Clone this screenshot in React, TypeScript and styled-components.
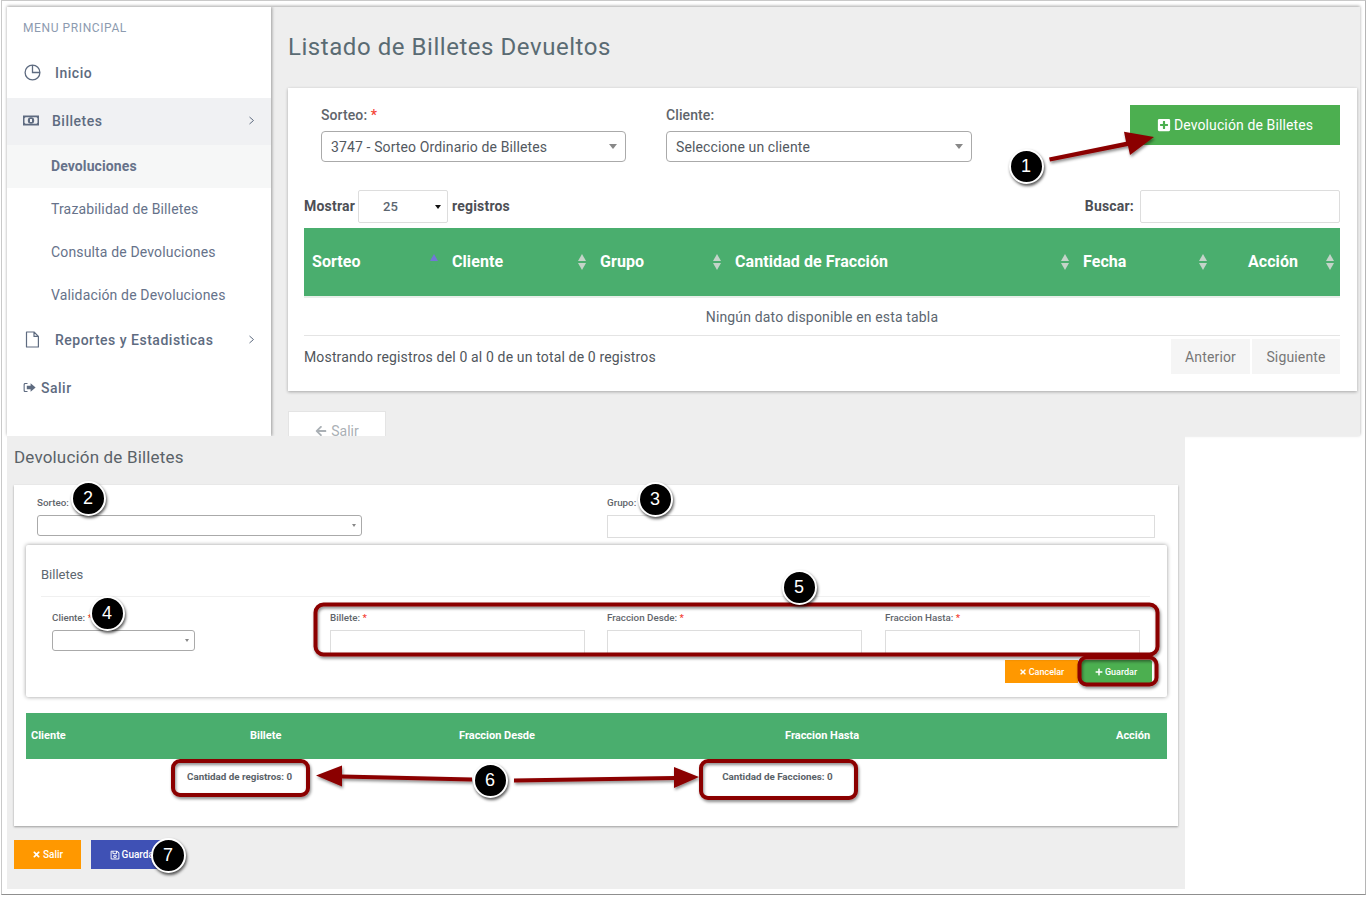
import React from "react";
import styled, { createGlobalStyle } from "styled-components";
import { FaPlusSquare, FaPlus, FaTimes, FaArrowLeft, FaRegSave } from "react-icons/fa";

const Global = createGlobalStyle`
  html, body { margin: 0; padding: 0; background: #fff; }
  * { box-sizing: border-box; }
  body { font-family: Roboto, "Liberation Sans", sans-serif; color: #5c6670; }
`;

const Frame = styled.div`
  position: relative;
  width: 1365px;
  height: 895px;
  margin-left: 1px;
  padding: 6px 5px 5px 5px;
  background: #fff;
  border: 1px solid #c9c9c9;
  border-bottom-color: #8f8f8f;
  border-right-color: #b5b5b5;
`;
const TopShot = styled.div`
  display: flex;
  width: 1353px;
  height: 429px;
  overflow: hidden;
  background: #eee;
  box-shadow: 0 -1px 3px rgba(0,0,0,.35);
`;
const Sidebar = styled.nav`
  width: 264px;
  flex: none;
  background: #fff;
  box-shadow: 1px 0 3px rgba(0,0,0,.35);
  z-index: 1;
`;
const MenuTitle = styled.div`
  height: 42px;
  padding: 14px 0 0 16px;
  font-size: 12px;
  line-height: 14px;
  color: #8d9bb0;
  letter-spacing: .6px;
`;
const MenuRow = styled.div<{ $active?: boolean; $h?: number; $pl?: number }>`
  display: flex;
  align-items: center;
  height: ${p => p.$h ?? 47}px;
  padding: 0 16px 2px ${p => p.$pl ?? 17}px;
  background: ${p => (p.$active ? "#f0f1f3" : "transparent")};
  font-size: 14px;
  font-weight: 500;
  letter-spacing: .5px;
  color: #5e6b80;
`;
const MenuIcon = styled.svg<{ $w: number }>`
  width: ${p => p.$w}px;
  height: 17px;
  flex: none;
  color: #5e6b80;
`;
const MenuLabel = styled.span<{ $ml: number }>`
  margin-left: ${p => p.$ml}px;
  flex: 1;
`;
const SubRow = styled.div<{ $active?: boolean }>`
  display: flex;
  align-items: center;
  height: 43px;
  padding: 0 0 2px 44px;
  font-size: 14px;
  font-weight: ${p => (p.$active ? 700 : 400)};
  letter-spacing: ${p => (p.$active ? ".1px" : ".15px")};
  color: #66728a;
  background: ${p => (p.$active ? "#f6f7f7" : "transparent")};
`;
const Main = styled.main`
  flex: 1;
  padding: 26px 3px 0 17px;
`;
const Title = styled.h1`
  margin: 0 0 27px;
  height: 28px;
  font-size: 24px;
  line-height: 28px;
  font-weight: 400;
  letter-spacing: .55px;
  color: #5a6b73;
`;
const Card = styled.section`
  height: 303px;
  padding: 0 17px 0 16px;
  background: #fff;
  box-shadow: 0 1px 3px rgba(0,0,0,.3);
`;
const FilterRow = styled.div`
  display: flex;
  height: 102px;
  padding: 17px 0 0 17px;
`;
const Field = styled.div<{ $w: number; $mr?: number }>`
  width: ${p => p.$w}px;
  margin-right: ${p => p.$mr ?? 0}px;
  flex: none;
`;
const Label = styled.div`
  height: 20px;
  margin-bottom: 6px;
  font-size: 14px;
  line-height: 20px;
  font-weight: 500;
  letter-spacing: .1px;
  color: #5f656b;
`;
const Req = styled.span`color: #f44336;`;
const SelectBox = styled.div`
  display: flex;
  align-items: center;
  justify-content: space-between;
  height: 31px;
  padding: 0 8px 0 9px;
  border: 1px solid #aaa;
  border-radius: 4px;
  font-size: 14px;
  letter-spacing: .12px;
  color: #53595f;
`;
const Caret = styled.i<{ $s?: number; $c?: string }>`
  display: block;
  width: 0;
  height: 0;
  border-left: ${p => p.$s ?? 4}px solid transparent;
  border-right: ${p => p.$s ?? 4}px solid transparent;
  border-top: ${p => (p.$s ?? 4) + 1}px solid ${p => p.$c ?? "#888"};
`;
const AddButton = styled.button`
  display: flex;
  align-items: center;
  justify-content: center;
  gap: 3px;
  width: 210px;
  height: 40px;
  margin-left: auto;
  border: 0;
  background: #4caf50;
  color: #fff;
  font: 400 14px Roboto, sans-serif;
  letter-spacing: .12px;
`;
const Controls = styled.div`
  display: flex;
  align-items: center;
  height: 33px;
  padding-bottom: 2px;
  font-size: 14px;
  font-weight: 700;
  letter-spacing: .2px;
  color: #4d4f55;
`;
const LenSelect = styled.div`
  display: flex;
  align-items: center;
  width: 90px;
  height: 33px;
  margin: 2px 4px 0 3px;
  padding: 0 6px 0 24px;
  border: 1px solid #ddd;
  border-radius: 2px;
  justify-content: space-between;
  font-size: 13px;
  font-weight: 500;
  color: #5c6670;
`;
const SearchBox = styled.div`
  width: 200px;
  height: 33px;
  margin: 2px 0 0 6px;
  border: 1px solid #ddd;
  border-radius: 2px;
`;
const Spacer = styled.div`flex: 1;`;
const TableHead = styled.div`
  display: grid;
  grid-template-columns: 140px 148px 135px 348px 138px 127px;
  height: 70px;
  margin-top: 5px;
  background: #4aae6e;
  border-bottom: 2px solid #e8efe9;
`;
const HeadCell = styled.div<{ $center?: boolean }>`
  position: relative;
  display: flex;
  align-items: center;
  justify-content: ${p => (p.$center ? "center" : "flex-start")};
  padding: 0 ${p => (p.$center ? "15px" : "8px")} 2px 8px;
  font-size: 16px;
  font-weight: 700;
  letter-spacing: .08px;
  color: #fff;
`;
const SortWrap = styled.span`
  position: absolute;
  right: 6px;
  top: 26px;
  display: flex;
  flex-direction: column;
  gap: 2px;
`;
const Up = styled.i<{ $c: string }>`
  display: block;
  width: 0;
  height: 0;
  border-left: 4.5px solid transparent;
  border-right: 4.5px solid transparent;
  border-bottom: 7px solid ${p => p.$c};
`;
const Down = styled.i<{ $c: string }>`
  display: block;
  width: 0;
  height: 0;
  border-left: 4.5px solid transparent;
  border-right: 4.5px solid transparent;
  border-top: 7px solid ${p => p.$c};
`;
const EmptyRow = styled.div`
  display: flex;
  align-items: center;
  justify-content: center;
  height: 38px;
  border-bottom: 1px solid #e4e4e4;
  font-size: 14px;
  letter-spacing: .15px;
  color: #5c6670;
`;
const Footer = styled.div`
  display: flex;
  align-items: center;
  height: 35px;
  margin-top: 3px;
  font-size: 14px;
  letter-spacing: .15px;
  color: #50565c;
`;
const PageButton = styled.div<{ $w: number }>`
  display: flex;
  align-items: center;
  justify-content: center;
  width: ${p => p.$w}px;
  height: 35px;
  margin-left: 2px;
  background: #f5f5f5;
  color: #777;
`;
const BackButton = styled.div`
  display: flex;
  align-items: center;
  justify-content: center;
  gap: 4px;
  width: 98px;
  height: 40px;
  margin-top: 20px;
  background: #fff;
  border: 1px solid #e4e4e4;
  font-size: 14px;
  color: #aab0b5;
`;
const BottomShot = styled.div`
  position: relative;
  width: 1178px;
  height: 453px;
  padding: 11px 7px 0;
  background: #eee;
  z-index: 2;
`;
const SubTitle = styled.h2`
  margin: 0 0 17px;
  font-size: 17px;
  line-height: 21px;
  font-weight: 400;
  letter-spacing: .17px;
  color: #5a6268;
`;
const FormCard = styled.section`
  width: 1164px;
  height: 341px;
  padding: 12px 11px 0 12px;
  background: #fff;
  box-shadow: 0 1px 2px rgba(0,0,0,.35);
`;
const TopRow = styled.div`
  display: flex;
  padding-left: 11px;
`;
const SmallLabel = styled.div`
  height: 12px;
  font-size: 9.8px;
  line-height: 12px;
  font-weight: 500;
  color: #5f656b;
`;
const SmallSelect = styled.div`
  display: flex;
  align-items: center;
  justify-content: flex-end;
  height: 21px;
  margin-top: 6px;
  padding-right: 5px;
  border: 1px solid #aaa;
  border-radius: 3px;
`;
const SmallInput = styled.div<{ $h: number; $noBottom?: boolean }>`
  height: ${p => p.$h}px;
  margin-top: 6px;
  border: 1px solid #ddd;
  border-bottom: ${p => (p.$noBottom ? "0" : "1px solid #ddd")};
`;
const InnerCard = styled.div`
  width: 1141px;
  height: 152px;
  margin-top: 7px;
  padding: 22px 17px 0 15px;
  background: #fff;
  border-radius: 2px;
  box-shadow: 0 0 4px rgba(0,0,0,.4);
`;
const InnerTitle = styled.div`
  font-size: 13px;
  line-height: 16px;
  color: #5d6770;
`;
const Divider = styled.hr`
  height: 1px;
  margin: 13px 0 15px;
  border: 0;
  background: #f0f0f0;
`;
const FormRow = styled.div`
  display: flex;
  height: 43px;
  padding-left: 11px;
`;
const Actions = styled.div`
  display: flex;
  justify-content: flex-end;
  gap: 2px;
  margin: 5px -2px 0 0;
`;
const SmallButton = styled.div<{ $bg: string; $w: number; $h: number; $radius?: number; $size?: number }>`
  display: flex;
  align-items: center;
  justify-content: center;
  gap: 2px;
  width: ${p => p.$w}px;
  height: ${p => p.$h}px;
  background: ${p => p.$bg};
  border-radius: ${p => p.$radius ?? 0}px;
  color: #fff;
  font-size: ${p => p.$size ?? 9}px;
  font-weight: 500;
`;
const DetailHead = styled.div`
  display: grid;
  grid-template-columns: 219px 209px 326px 331px 1fr;
  align-items: center;
  width: 1141px;
  height: 46px;
  margin-top: 16px;
  padding: 0 0 2px 5px;
  background: #4aae6e;
  font-size: 11px;
  font-weight: 700;
  color: #fff;
`;
const Stats = styled.div`
  display: flex;
  height: 12px;
  margin-top: 12px;
  padding-left: 161px;
  font-size: 9.8px;
  line-height: 12px;
  font-weight: 700;
  color: #5a6268;
`;
const StatSpacer = styled.span`width: 430px;`;
const BottomActions = styled.div`
  display: flex;
  gap: 10px;
  margin-top: 14px;
`;
const Overlay = styled.svg`
  position: absolute;
  left: 0;
  top: 0;
  width: 1365px;
  height: 895px;
  z-index: 3;
  pointer-events: none;
`;
const Marker = styled.div<{ $x: number; $y: number }>`
  position: absolute;
  left: ${p => p.$x - 2 - 17.5}px;
  top: ${p => p.$y - 1 - 17.5}px;
  z-index: 4;
  display: flex;
  align-items: center;
  justify-content: center;
  width: 35px;
  height: 35px;
  border: 2.5px solid #fff;
  border-radius: 50%;
  background: #000;
  color: #fff;
  box-shadow: 1px 2px 3px rgba(0,0,0,.65);
  font: 400 18px "Liberation Sans", Arial, sans-serif;
`;

const Sort = ({ up = "#c4d4c9", down = "#c4d4c9" }: { up?: string; down?: string }) => (
  <SortWrap>
    <Up $c={up} />
    <Down $c={down} />
  </SortWrap>
);

const markers: [string, number, number][] = [
  ["1", 1026, 166], ["2", 88, 498], ["3", 655, 499], ["4", 107, 613],
  ["5", 799, 587], ["6", 490, 780], ["7", 168, 855],
];

export default function App() {
  return (
    <>
      <Global />
      <Frame>
        <TopShot>
          <Sidebar>
            <MenuTitle>MENU PRINCIPAL</MenuTitle>
            <MenuRow $h={49}>
              <MenuIcon $w={17} viewBox="0 0 17 17" fill="none" stroke="currentColor" strokeWidth="1.3">
                <circle cx="8.5" cy="8.5" r="7.4" />
                <path d="M8.500 1v7.500H16" />
              </MenuIcon>
              <MenuLabel $ml={14}>Inicio</MenuLabel>
            </MenuRow>
            <MenuRow $active $pl={16}>
              <MenuIcon $w={16} viewBox="0 0 16 17" fill="currentColor">
                <path fillRule="evenodd" d="M0 3.500h16v10H0zM2.500 5.200 1.500 6.200v4.600l1 1h11l1-1V6.200l-1-1z" />
                <path fillRule="evenodd" d="M8 5.300a3.200 3.200 0 1 1 0 6.400 3.200 3.200 0 0 1 0-6.400zM7 7v3h2V7z" />
              </MenuIcon>
              <MenuLabel $ml={13}>Billetes</MenuLabel>
              <MenuIcon $w={7} viewBox="0 0 7 17" fill="none" stroke="currentColor" strokeWidth="1">
                <path d="M1.500 5l4 3.500-4 3.500" />
              </MenuIcon>
            </MenuRow>
            <SubRow $active>Devoluciones</SubRow>
            <SubRow>Trazabilidad de Billetes</SubRow>
            <SubRow>Consulta de Devoluciones</SubRow>
            <SubRow>Validación de Devoluciones</SubRow>
            <MenuRow>
              <MenuIcon $w={17} viewBox="0 0 17 17" fill="none" stroke="currentColor" strokeWidth="1.2" strokeLinejoin="round">
                <path d="M2.500 1h7.500l4.400 4.400V16H2.500zM10 1v4.400h4.400" />
              </MenuIcon>
              <MenuLabel $ml={14}>Reportes y Estadisticas</MenuLabel>
              <MenuIcon $w={7} viewBox="0 0 7 17" fill="none" stroke="currentColor" strokeWidth="1">
                <path d="M1.500 5l4 3.500-4 3.500" />
              </MenuIcon>
            </MenuRow>
            <MenuRow $h={49} $pl={16}>
              <MenuIcon $w={13} viewBox="0 0 13 17" fill="currentColor">
                <path d="M4.500 4H2.200C1.200 4 .6 4.700.6 5.600v5.800c0 .9.6 1.600 1.600 1.600h2.300v-1.100H2.400c-.4 0-.7-.3-.7-.7V5.800c0-.4.3-.7.7-.7h2.100z" />
                <path d="M7.600 4.200l5 4.300-5 4.300V10.200H3.800V6.800h3.800z" />
              </MenuIcon>
              <MenuLabel $ml={5}>Salir</MenuLabel>
            </MenuRow>
          </Sidebar>
          <Main>
            <Title>Listado de Billetes Devueltos</Title>
            <Card>
              <FilterRow>
                <Field $w={305} $mr={40}>
                  <Label>Sorteo: <Req>*</Req></Label>
                  <SelectBox>3747 - Sorteo Ordinario de Billetes<Caret /></SelectBox>
                </Field>
                <Field $w={306}>
                  <Label>Cliente:</Label>
                  <SelectBox>Seleccione un cliente<Caret /></SelectBox>
                </Field>
                <AddButton><FaPlusSquare size={14} /> Devolución de Billetes</AddButton>
              </FilterRow>
              <Controls>
                Mostrar
                <LenSelect>25<Caret $s={3.5} $c="#111" /></LenSelect>
                registros
                <Spacer />
                Buscar:
                <SearchBox />
              </Controls>
              <TableHead>
                <HeadCell>Sorteo<Sort up="#7277d6" down="#4aae6e" /></HeadCell>
                <HeadCell>Cliente<Sort /></HeadCell>
                <HeadCell>Grupo<Sort /></HeadCell>
                <HeadCell>Cantidad de Fracción<Sort /></HeadCell>
                <HeadCell>Fecha<Sort /></HeadCell>
                <HeadCell $center>Acción<Sort /></HeadCell>
              </TableHead>
              <EmptyRow>Ningún dato disponible en esta tabla</EmptyRow>
              <Footer>
                Mostrando registros del 0 al 0 de un total de 0 registros
                <Spacer />
                <PageButton $w={79}>Anterior</PageButton>
                <PageButton $w={88}>Siguiente</PageButton>
              </Footer>
            </Card>
            <BackButton><FaArrowLeft size={12} /> Salir</BackButton>
          </Main>
        </TopShot>
        <BottomShot>
          <SubTitle>Devolución de Billetes</SubTitle>
          <FormCard>
            <TopRow>
              <Field $w={325} $mr={245}>
                <SmallLabel>Sorteo:</SmallLabel>
                <SmallSelect><Caret $s={2.5} /></SmallSelect>
              </Field>
              <Field $w={548}>
                <SmallLabel>Grupo:</SmallLabel>
                <SmallInput $h={23} />
              </Field>
            </TopRow>
            <InnerCard>
              <InnerTitle>Billetes</InnerTitle>
              <Divider />
              <FormRow>
                <Field $w={143} $mr={135}>
                  <SmallLabel>Cliente: <Req>*</Req></SmallLabel>
                  <SmallSelect><Caret $s={2.5} /></SmallSelect>
                </Field>
                <Field $w={255} $mr={22}>
                  <SmallLabel>Billete: <Req>*</Req></SmallLabel>
                  <SmallInput $h={25} $noBottom />
                </Field>
                <Field $w={255} $mr={23}>
                  <SmallLabel>Fraccion Desde: <Req>*</Req></SmallLabel>
                  <SmallInput $h={25} $noBottom />
                </Field>
                <Field $w={255}>
                  <SmallLabel>Fraccion Hasta: <Req>*</Req></SmallLabel>
                  <SmallInput $h={25} $noBottom />
                </Field>
              </FormRow>
              <Actions>
                <SmallButton $bg="#ff9800" $w={73} $h={23}><FaTimes size={8} /> Cancelar</SmallButton>
                <SmallButton $bg="#4caf50" $w={72} $h={23} $radius={2}><FaPlus size={8} /> Guardar</SmallButton>
              </Actions>
            </InnerCard>
            <DetailHead>
              <span>Cliente</span>
              <span>Billete</span>
              <span>Fraccion Desde</span>
              <span>Fraccion Hasta</span>
              <span>Acción</span>
            </DetailHead>
            <Stats>
              <span>Cantidad de registros: 0</span>
              <StatSpacer />
              <span>Cantidad de Facciones: 0</span>
            </Stats>
          </FormCard>
          <BottomActions>
            <SmallButton $bg="#ff9800" $w={67} $h={29} $size={10}><FaTimes size={9} /> Salir</SmallButton>
            <SmallButton $bg="#3f51b5" $w={85} $h={29} $size={10}><FaRegSave size={10} /> Guardar</SmallButton>
          </BottomActions>
        </BottomShot>
        <Overlay viewBox="2 1 1365 895">
          <defs>
            <filter id="sh" x="-10%" y="-30%" width="120%" height="170%">
              <feDropShadow dx="1" dy="2" stdDeviation="1.5" floodColor="#000" floodOpacity=".45" />
            </filter>
          </defs>
          <g filter="url(#sh)" fill="none" stroke="#8b0000" strokeWidth="4">
            <rect x="315.5" y="604.5" width="842" height="50" rx="8" />
            <rect x="1079.5" y="657.5" width="77" height="27" rx="7" />
            <rect x="173" y="761" width="135" height="34" rx="7" />
            <rect x="701" y="761" width="155" height="37" rx="7" />
          </g>
          <g filter="url(#sh)" fill="#8b0000">
            <path d="M1049 157.500l77-15.800-2-10 30 5.300-24 18-2-9-78 15.500z" />
            <path d="M472 777.500l-130-3v-9l-26 10 26 11v-8l130 3z" />
            <path d="M514 778.500l160-2.500v-9l25 10-25 11v-8l-160 2.500z" />
          </g>
        </Overlay>
        {markers.map(([n, x, y]) => (
          <Marker key={n} $x={x} $y={y}>{n}</Marker>
        ))}
      </Frame>
    </>
  );
}
